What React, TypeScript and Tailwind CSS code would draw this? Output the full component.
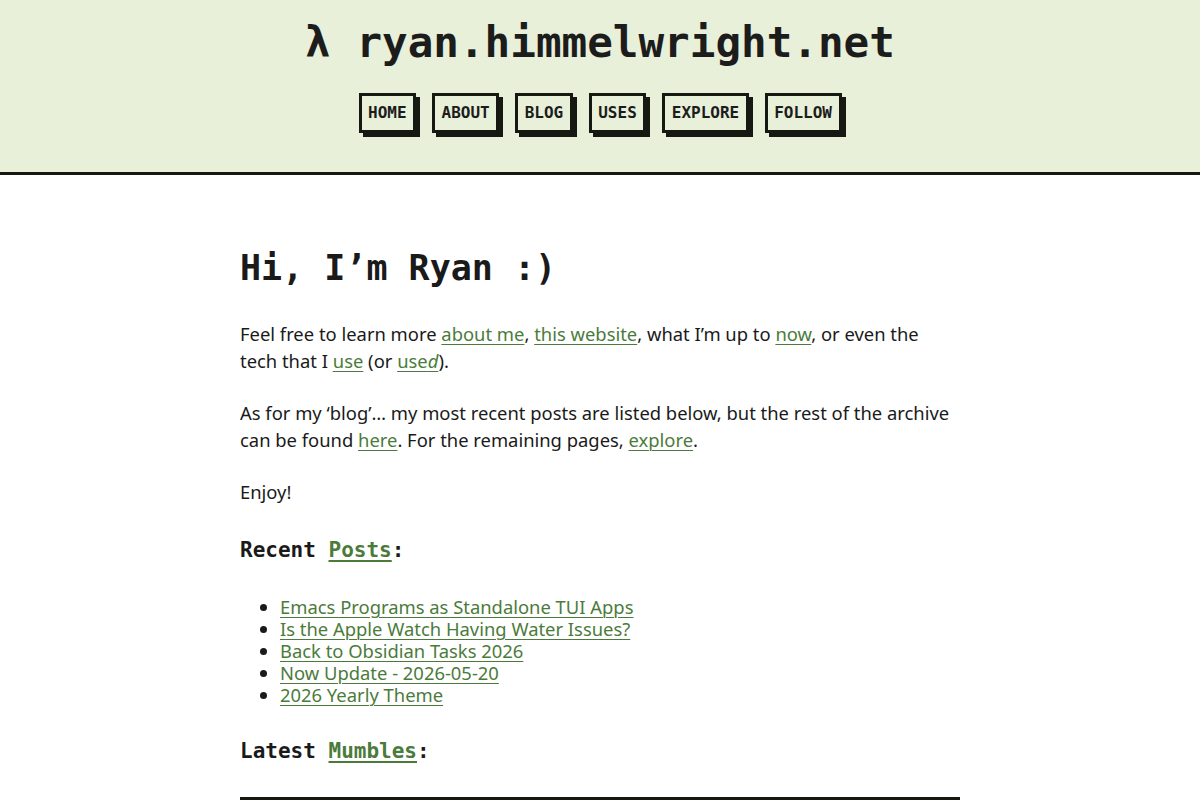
const navItems = ['HOME', 'ABOUT', 'BLOG', 'USES', 'EXPLORE', 'FOLLOW'];

const posts = [
  'Emacs Programs as Standalone TUI Apps',
  'Is the Apple Watch Having Water Issues?',
  'Back to Obsidian Tasks 2026',
  'Now Update - 2026-05-20',
  '2026 Yearly Theme',
];

const mono = "font-['DejaVu_Sans_Mono',monospace]";
const link = 'text-[#4b7b3b] underline decoration-1 underline-offset-[3px]';

export default function App() {
  return (
    <div className="min-h-[800px] bg-white text-[#1a1a1a] font-['Noto_Sans',sans-serif]">
      <header className="border-b-[3px] border-[#161812] bg-[#e8f0d9] pb-[39px] pt-[17px]">
        <h1 className={`${mono} text-center text-[42.6px] font-bold leading-[50px] text-[#1c1c1c]`}>
          λ ryan.himmelwright.net
        </h1>
        <nav className="mt-[26px] flex justify-center gap-4">
          {navItems.map((item) => (
            <a
              key={item}
              href="#"
              className={`${mono} flex h-[40px] items-center border-[3px] border-[#161812] bg-[#e8f0d9] px-[6.5px] text-[16px] font-bold text-[#1c1c1c] shadow-[4px_4px_0_#161812]`}
            >
              {item}
            </a>
          ))}
        </nav>
      </header>

      <main className="mx-auto w-[720px] pt-[72px] text-[18.4px] leading-[27px]">
        <h2 className={`${mono} text-[35px] font-bold leading-[42px]`}>Hi, I’m Ryan :)</h2>

        <p className="mt-[31px]">
          Feel free to learn more <a href="#" className={link}>about me</a>,{' '}
          <a href="#" className={link}>this website</a>, what I’m up to{' '}
          <a href="#" className={link}>now</a>, or even the tech that I{' '}
          <a href="#" className={link}>use</a> (or{' '}
          <a href="#" className={link}>
            use<em>d</em>
          </a>
          ).
        </p>

        <p className="mt-[25px]">
          As for my ‘blog’… my most recent posts are listed below, but the rest of the archive
          can be found <a href="#" className={link}>here</a>. For the remaining pages,{' '}
          <a href="#" className={link}>explore</a>.
        </p>

        <p className="mt-[25px]">Enjoy!</p>

        <h3 className={`${mono} mt-[33px] text-[21px] font-bold leading-[25px]`}>
          Recent <a href="#" className={`${link} decoration-2`}>Posts</a>:
        </h3>

        <ul className="mt-[33px] list-disc pl-10 leading-[22px]">
          {posts.map((p) => (
            <li key={p}>
              <a href="#" className={link}>
                {p}
              </a>
            </li>
          ))}
        </ul>

        <h3 className={`${mono} mt-[33px] text-[21px] font-bold leading-[25px]`}>
          Latest <a href="#" className={`${link} decoration-2`}>Mumbles</a>:
        </h3>

        <div className="mt-[33px] h-[120px] border-[3px] border-[#161812]" />
      </main>
    </div>
  );
}
